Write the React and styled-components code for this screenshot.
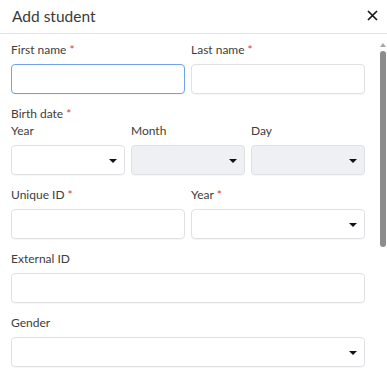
import React from "react";
import styled, { createGlobalStyle } from "styled-components";

const GlobalStyle = createGlobalStyle`
  html, body {
    margin: 0;
    padding: 0;
    background: #fff;
    font-family: Lato, "Open Sans", sans-serif;
  }
  * { box-sizing: border-box; }
`;

const Dialog = styled.div`
  position: relative;
  width: 387px;
  height: 372px;
  display: flex;
  flex-direction: column;
  background: #fff;
  overflow: hidden;
`;

const Header = styled.div`
  height: 34px;
  flex-shrink: 0;
  display: flex;
  align-items: center;
  justify-content: space-between;
  padding: 0 8px 2px 12px;
  border-bottom: 1px solid #e4e4e4;
`;

const Title = styled.h2`
  margin: 0;
  font-size: 15.5px;
  font-weight: 400;
  color: #3a3a3a;
`;

const CloseButton = styled.button`
  border: 0;
  background: none;
  padding: 0;
  width: 14px;
  height: 14px;
  display: flex;
  align-items: center;
  justify-content: center;
  cursor: pointer;
`;

const Body = styled.div`
  flex: 1;
  overflow: hidden;
  padding: 8px 22px 20px 11px;
`;

const Scrollbar = styled.div`
  position: absolute;
  top: 41px;
  right: 0;
  width: 8px;
  bottom: 0;
  display: flex;
  flex-direction: column;
  align-items: center;
`;

const ScrollArrow = styled.span`
  width: 0;
  height: 0;
  margin-top: 2px;
  border-left: 3px solid transparent;
  border-right: 3px solid transparent;
  border-bottom: 4px solid #a6a6a6;
`;

const Thumb = styled.div`
  width: 6px;
  height: 196px;
  margin-top: 4px;
  border-radius: 3px;
  background: #8c8c8c;
`;

const Row = styled.div`
  display: grid;
  grid-template-columns: repeat(${(p) => p.$cols || 1}, 1fr);
  gap: 6px;
  margin-bottom: 12px;
`;

const Field = styled.div`
  display: flex;
  flex-direction: column;
`;

const Label = styled.label`
  font-size: 12px;
  line-height: 16px;
  color: #3d3d3d;
  margin-bottom: ${(p) => (p.$tight ? "1px" : "6px")};
`;

const Star = styled.span`
  color: #e0393e;
  margin-left: 3px;
`;

const Input = styled.input`
  height: 30px;
  width: 100%;
  border: 1px solid #dfe1e4;
  border-radius: 4px;
  background: #fff;
  box-shadow: 0 1px 1px rgba(0, 0, 0, 0.04);
  font: inherit;
  padding: 0 8px;
  outline: none;

  ${(p) =>
    p.$focused &&
    `
    border: 1.5px solid #6fa3ee;
  `}
`;

const SelectBox = styled.div`
  height: 30px;
  border: 1px solid #dfe1e4;
  border-radius: 4px;
  background: ${(p) => (p.$disabled ? "#eef0f3" : "#fff")};
  box-shadow: 0 1px 1px rgba(0, 0, 0, 0.04);
  display: flex;
  align-items: center;
  justify-content: flex-end;
  padding-right: 7px;
`;

const Caret = styled.span`
  width: 0;
  height: 0;
  border-left: 4px solid transparent;
  border-right: 4px solid transparent;
  border-top: 4px solid #111;
  margin-top: 1px;
`;

function Select({ disabled }) {
  return (
    <SelectBox $disabled={disabled}>
      <Caret />
    </SelectBox>
  );
}

function Req({ children }) {
  return (
    <Label>
      {children}
      <Star>*</Star>
    </Label>
  );
}

export default function App() {
  return (
    <Dialog>
      <GlobalStyle />
      <Header>
        <Title>Add student</Title>
        <CloseButton aria-label="Close">
          <svg width="11" height="11" viewBox="0 0 11 11">
            <path d="M1 1L10 10M10 1L1 10" stroke="#111" strokeWidth="1.6" />
          </svg>
        </CloseButton>
      </Header>
      <Body>
        <Row $cols={2}>
          <Field>
            <Req>First name</Req>
            <Input $focused />
          </Field>
          <Field>
            <Req>Last name</Req>
            <Input />
          </Field>
        </Row>

        <Label $tight as="div">
          Birth date<Star>*</Star>
        </Label>
        <Row $cols={3}>
          <Field>
            <Label>Year</Label>
            <Select />
          </Field>
          <Field>
            <Label>Month</Label>
            <Select disabled />
          </Field>
          <Field>
            <Label>Day</Label>
            <Select disabled />
          </Field>
        </Row>

        <Row $cols={2}>
          <Field>
            <Req>Unique ID</Req>
            <Input />
          </Field>
          <Field>
            <Req>Year</Req>
            <Select />
          </Field>
        </Row>

        <Row>
          <Field>
            <Label>External ID</Label>
            <Input />
          </Field>
        </Row>

        <Row>
          <Field>
            <Label>Gender</Label>
            <Select />
          </Field>
        </Row>
      </Body>
      <Scrollbar>
        <ScrollArrow />
        <Thumb />
      </Scrollbar>
    </Dialog>
  );
}
